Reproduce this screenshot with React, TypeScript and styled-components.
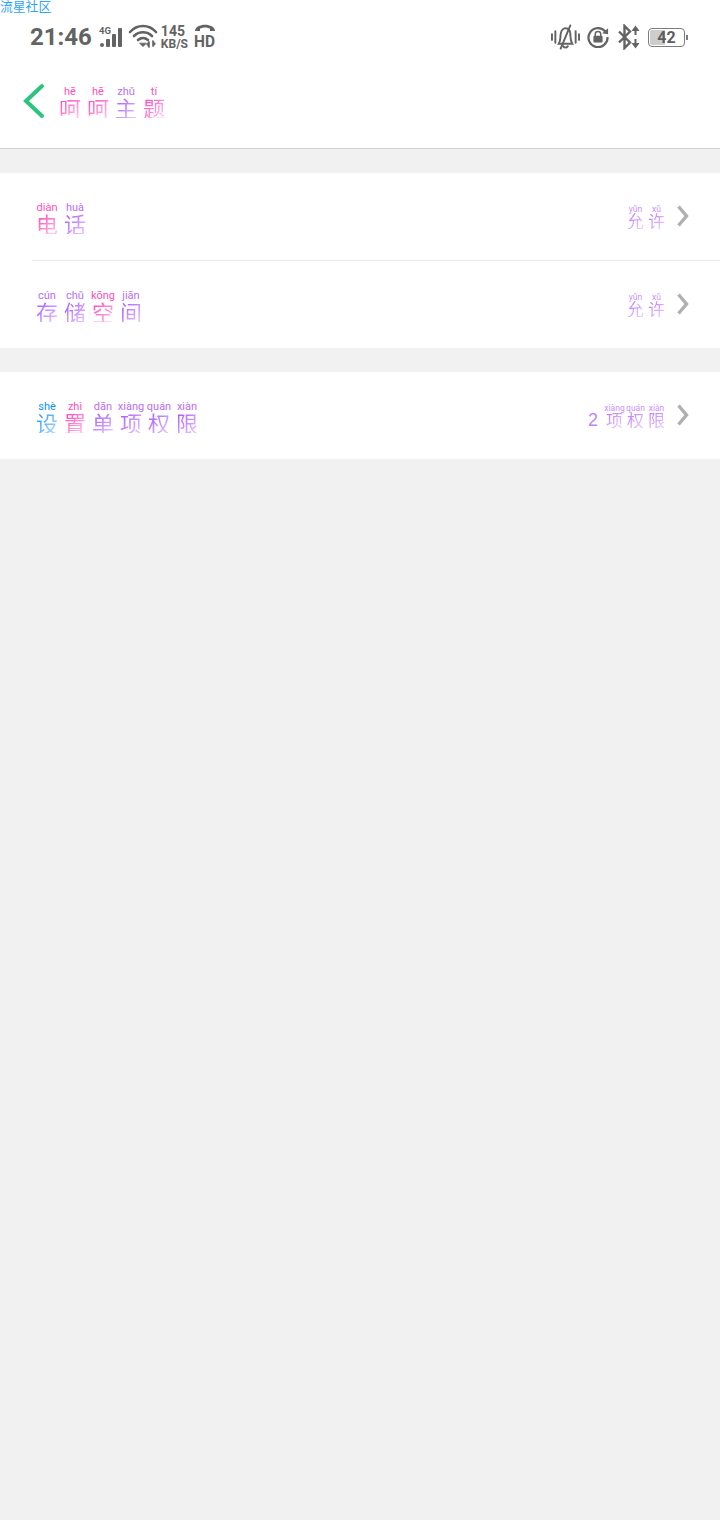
import React from 'react';
import styled, { createGlobalStyle } from 'styled-components';

type Tone = 'pink' | 'purple' | 'blue' | 'lilac';
type Glyph = [string, string, Tone];

const tones: Record<Tone, { pin: string; from: string; to: string }> = {
  pink: { pin: '#ff4fb8', from: '#ff4dbd', to: '#ffc4ec' },
  purple: { pin: '#b76ef5', from: '#ac5cff', to: '#e6c8ff' },
  blue: { pin: '#0f8fff', from: '#2a98ff', to: '#b4dcff' },
  lilac: { pin: '#cc90ff', from: '#c27cff', to: '#e8d0ff' },
};

const GlobalStyle = createGlobalStyle`
  html, body { margin: 0; padding: 0; background: #f1f1f1; }
  body { font-family: Roboto, "Noto Sans CJK SC", sans-serif; }
`;

const Page = styled.div`
  position: relative;
  width: 720px;
  height: 1520px;
  background: #f1f1f1;
  overflow: hidden;
`;

const Watermark = styled.div`
  position: absolute;
  left: 0;
  top: 0;
  font: 400 12.8px/12px "Noto Sans CJK SC", sans-serif;
  color: #2ea6f5;
`;

const Header = styled.header`
  height: 148px;
  background: #fff;
  border-bottom: 1px solid #cfcfcf;
`;

const StatusBar = styled.div`
  height: 74px;
  padding: 0 30px;
  display: flex;
  align-items: center;
  justify-content: space-between;
  color: #636363;
`;

const StatusGroup = styled.div`
  display: flex;
  align-items: center;
`;

const Spacer = styled.span<{ $w: number }>`
  width: ${p => p.$w}px;
`;

const Time = styled.span`
  font: 700 24px/30px Roboto, sans-serif;
  margin-right: 7px;
`;

const Speed = styled.span`
  font: 700 12px/13px Roboto, sans-serif;
  margin: 2px 6px 0 3px;
  display: flex;
  flex-direction: column;
  span:first-child { font-size: 14px; }
`;

const Battery = styled.div`
  position: relative;
  width: 37px;
  height: 19px;
  margin-left: 7px;
  margin-right: 5px;
  box-sizing: border-box;
  border: 1px solid #7c7c7c;
  border-radius: 4px;
  font: 700 16px/17px Roboto, sans-serif;
  text-align: center;
  color: #5e5e5e;
  &::before {
    content: '';
    position: absolute;
    left: 1px;
    top: 1px;
    bottom: 1px;
    width: 15px;
    background: #cdcdcd;
    border-radius: 2px 0 0 2px;
  }
  &::after {
    content: '';
    position: absolute;
    right: -4px;
    top: 6px;
    width: 2px;
    height: 5px;
    background: #7c7c7c;
  }
`;

const BatteryText = styled.span`
  position: relative;
`;

const NavBar = styled.div`
  display: flex;
  align-items: flex-start;
  padding: 9px 0 0 22px;
  gap: 10px;
`;

const TitleWrap = styled.div`
  padding-top: 4px;
`;

const Section = styled.section`
  margin-top: 24px;
  background: #fff;
`;

const Row = styled.div<{ $divider?: boolean }>`
  height: ${p => (p.$divider ? 88 : 87)}px;
  box-sizing: border-box;
  padding: 30px 30px 0 33px;
  display: flex;
  justify-content: space-between;
  position: relative;
  ${p => p.$divider && `
    &::after {
      content: '';
      position: absolute;
      left: 32px;
      right: 0;
      bottom: 0;
      height: 1px;
      background: #e8e8e8;
    }
  `}
`;

const RightSide = styled.div`
  display: flex;
  align-items: flex-start;
  gap: 9px;
  margin-top: 2px;
`;

const Word = styled.div`
  display: flex;
`;

const Cell = styled.div<{ $w: number }>`
  width: ${p => p.$w}px;
  display: flex;
  flex-direction: column;
  align-items: center;
`;

const Pin = styled.span<{ $size: number; $color: string }>`
  font: 400 ${p => p.$size}px/${p => Math.round(p.$size) - 1}px Roboto, sans-serif;
  color: ${p => p.$color};
  white-space: nowrap;
`;

const Han = styled.span<{ $size: number; $from: string; $to: string }>`
  width: ${p => p.$size}px;
  margin-top: -1px;
  font: 400 ${p => p.$size}px/${p => p.$size}px "Noto Sans CJK SC", sans-serif;
  background: linear-gradient(135deg, ${p => p.$from} 15%, ${p => p.$to} 95%);
  -webkit-background-clip: text;
  background-clip: text;
  color: transparent;
`;

const Digit = styled.span`
  width: 10px;
  margin: 6px -3px 0 0;
  font: 400 18px/20px "Liberation Sans", sans-serif;
  color: #bf86f5;
`;

const ChevronSvg = styled.svg`
  margin-top: -1px;
`;

function PinyinWord({ items, big }: { items: Glyph[]; big?: boolean }) {
  const w = big ? 28 : 21;
  const pinSize = big ? 11 : 8.5;
  const hanSize = big ? 22 : 17;
  return (
    <Word>
      {items.map(([pin, han, tone], i) => (
        <Cell key={i} $w={w}>
          <Pin $size={pinSize} $color={tones[tone].pin}>{pin}</Pin>
          <Han $size={hanSize} $from={tones[tone].from} $to={tones[tone].to}>{han}</Han>
        </Cell>
      ))}
    </Word>
  );
}

const Chevron = () => (
  <ChevronSvg width="14" height="24" viewBox="0 0 14 24">
    <path d="M2.5 2.5 L10.5 12 L2.5 21.5" fill="none" stroke="#b0b0b0" strokeWidth="3.4" />
  </ChevronSvg>
);

const BackArrow = () => (
  <svg width="24" height="38" viewBox="0 0 24 38">
    <path d="M20 3 L4 18 L20 33" fill="none" stroke="#2bc47e" strokeWidth="4" strokeLinecap="round" strokeLinejoin="miter" />
  </svg>
);

const Signal = () => (
  <svg width="25" height="24" viewBox="0 0 25 24" fill="#636363">
    <text x="0" y="9" fontSize="9.5" fontWeight="700" fontFamily="Roboto">4G</text>
    <circle cx="3" cy="20" r="2" />
    <rect x="7" y="14" width="4" height="8" rx="1" />
    <rect x="13" y="9" width="4" height="13" rx="1" />
    <rect x="19" y="3" width="4" height="19" rx="1" />
  </svg>
);

const Wifi = () => (
  <svg width="30" height="26" viewBox="0 0 30 26" fill="none" stroke="#636363" strokeWidth="2.6" strokeLinecap="round">
    <path d="M2 8 C9 0 21 0 28 8" />
    <path d="M6 12 C11 7 19 7 24 12" />
    <path d="M10 16 C13 13.5 17 13.5 20 16" />
    <path d="M12 19.5 L15 22.5 L18 19.5 Z" fill="#636363" strokeWidth="1" />
    <path d="M21 18 L21 23 M25 17 L25 22" strokeWidth="1.4" />
    <path d="M18.5 20 L21 17.5 L21 23 Z M27.5 20 L25 22.5 L25 17 Z" fill="#636363" strokeWidth="0.6" />
  </svg>
);

const HdCall = () => (
  <svg width="22" height="26" viewBox="0 0 22 26" overflow="visible">
    <path d="M1 7 C1 -1.5 21 -1.5 21 7 L16 7 L16 4.5 C12 3 10 3 6 4.5 L6 7 Z" fill="#636363" />
    <text x="0" y="23" fontSize="17" fontWeight="700" fontFamily="Roboto" fill="#636363" textLength="21" lengthAdjust="spacingAndGlyphs">HD</text>
  </svg>
);

const Vibrate = () => (
  <svg width="29" height="26" viewBox="0 0 30 26" fill="none" stroke="#636363" strokeWidth="2" strokeLinecap="round">
    <path d="M1 10 V16 M4.5 7 V19 M25.5 7 V19 M29 10 V16" />
    <path d="M8 20 C10 17 9.5 14 10 10 C10.5 6 13 4 15 4 C18 4 19.8 6 20 10 C20.3 14 20 17 22 20 Z" />
    <path d="M12.5 22.5 C14 24.5 16 24.5 17.5 22.5" />
    <path d="M20 1 L10 25" />
  </svg>
);

const RotateLock = () => (
  <svg width="22" height="22" viewBox="0 0 24 24" fill="none" stroke="#636363">
    <path d="M20 6 A10.4 10.4 0 1 0 22.4 12" strokeWidth="2.4" />
    <path d="M23 2.5 L23 9 L16.5 8 Z" fill="#636363" stroke="none" />
    <path d="M9 11 V9 A3 3 0 0 1 15 9 V11" strokeWidth="1.6" />
    <rect x="7" y="10.5" width="10" height="7.5" rx="1.2" fill="#636363" stroke="none" />
  </svg>
);

const BluetoothData = () => (
  <svg width="24" height="26" viewBox="0 0 24 26" fill="none" stroke="#636363" strokeWidth="2.4">
    <path d="M2 7.5 L13 18.5 L7.5 24 V2 L13 7.5 L2 18.5" />
    <path d="M18.5 4 V22" strokeWidth="2" strokeDasharray="7 4" />
    <path d="M14.5 7 L18.5 1.5 L22.5 7 Z M14.5 19 L18.5 24.5 L22.5 19 Z" fill="#636363" stroke="none" />
  </svg>
);

const title: Glyph[] = [['hē', '呵', 'pink'], ['hē', '呵', 'pink'], ['zhǔ', '主', 'purple'], ['tí', '题', 'pink']];
const phone: Glyph[] = [['diàn', '电', 'pink'], ['huà', '话', 'purple']];
const storage: Glyph[] = [['cún', '存', 'purple'], ['chǔ', '储', 'purple'], ['kōng', '空', 'pink'], ['jiān', '间', 'purple']];
const allowed: Glyph[] = [['yǔn', '允', 'lilac'], ['xǔ', '许', 'lilac']];
const single: Glyph[] = [
  ['shè', '设', 'blue'], ['zhì', '置', 'pink'], ['dān', '单', 'purple'],
  ['xiàng', '项', 'purple'], ['quán', '权', 'purple'], ['xiàn', '限', 'purple'],
];
const count: Glyph[] = [['xiàng', '项', 'lilac'], ['quán', '权', 'lilac'], ['xiàn', '限', 'lilac']];

export default function App() {
  return (
    <Page>
      <GlobalStyle />
      <Watermark>流星社区</Watermark>
      <Header>
        <StatusBar>
          <StatusGroup>
            <Time>21:46</Time>
            <Signal />
            <Spacer $w={4} />
            <Wifi />
            <Speed><span>145</span><span>KB/S</span></Speed>
            <HdCall />
          </StatusGroup>
          <StatusGroup>
            <Vibrate />
            <Spacer $w={7} />
            <RotateLock />
            <Spacer $w={8} />
            <BluetoothData />
            <Battery><BatteryText>42</BatteryText></Battery>
          </StatusGroup>
        </StatusBar>
        <NavBar>
          <BackArrow />
          <TitleWrap><PinyinWord items={title} big /></TitleWrap>
        </NavBar>
      </Header>
      <Section>
        <Row $divider>
          <PinyinWord items={phone} big />
          <RightSide>
            <PinyinWord items={allowed} />
            <Chevron />
          </RightSide>
        </Row>
        <Row>
          <PinyinWord items={storage} big />
          <RightSide>
            <PinyinWord items={allowed} />
            <Chevron />
          </RightSide>
        </Row>
      </Section>
      <Section>
        <Row>
          <PinyinWord items={single} big />
          <RightSide>
            <Digit>2</Digit>
            <PinyinWord items={count} />
            <Chevron />
          </RightSide>
        </Row>
      </Section>
    </Page>
  );
}
